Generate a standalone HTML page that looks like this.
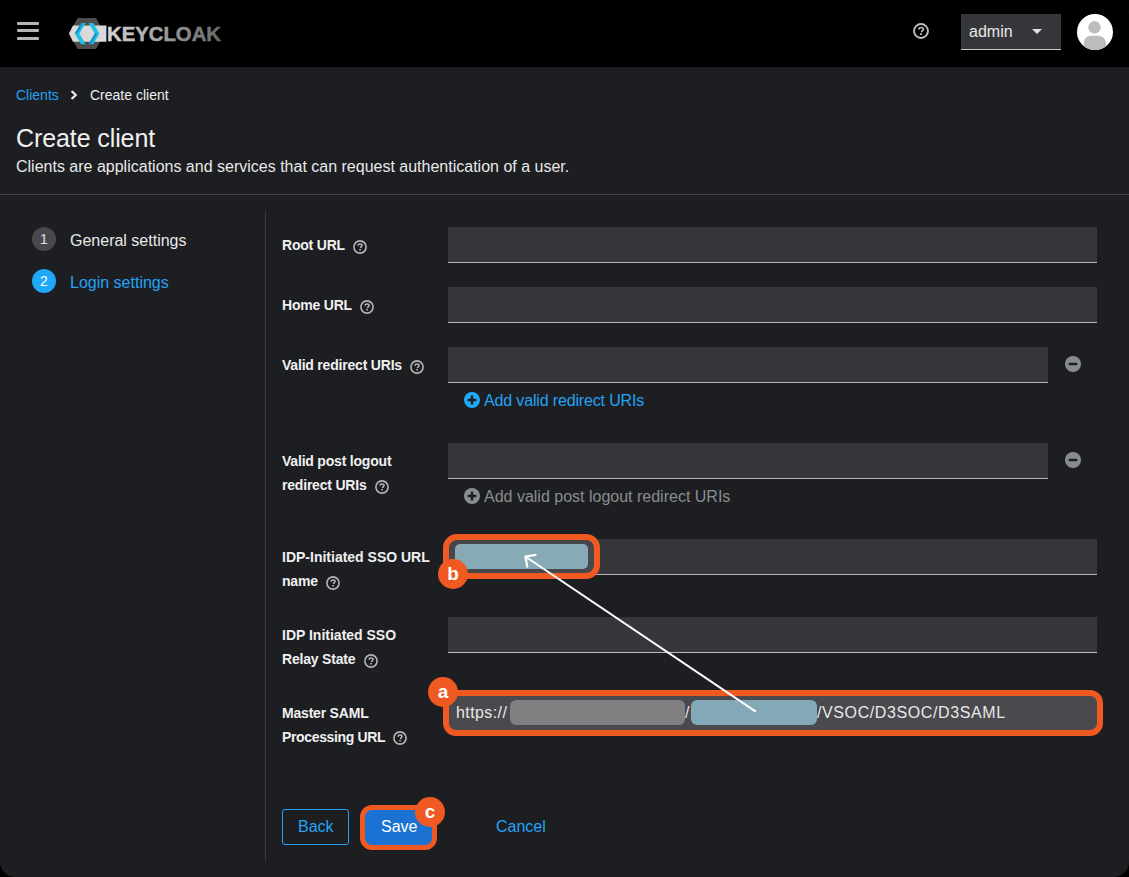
<!DOCTYPE html>
<html><head><meta charset="utf-8">
<style>
*{box-sizing:border-box;margin:0;padding:0}
html,body{width:1129px;height:877px;overflow:hidden;background:#000}
body{font-family:"Liberation Sans",sans-serif;position:relative}
#frame{position:absolute;left:0;top:0;width:1129px;height:877px;background:#1d1e22;border-radius:15px;overflow:hidden}
#mast{position:absolute;left:0;top:0;width:1129px;height:67px;background:#000}
.a{position:absolute;white-space:nowrap}
.t16{font-size:16px;line-height:24px}
.lbl{font-size:14px;font-weight:bold;color:#f0f0f0;line-height:24px;letter-spacing:-0.2px}
.inp{position:absolute;background:#36373b;border-bottom:1px solid #b8bbbe}
.help{position:absolute;width:14px;height:14px}
.link{color:#22a3f5}
.badge{width:30px;height:30px;border-radius:50%;background:#f05a22;color:#fff;font-weight:bold;font-size:19px;line-height:29px;text-align:center}
</style></head><body>
<svg width="0" height="0" style="position:absolute">
  <defs>
    <g id="hq">
      <circle cx="7" cy="7" r="6.1" fill="none" stroke="#b5b5b5" stroke-width="1.6"/>
      <path d="M5.1 5.7 C5.1 4.5 6 3.9 7.05 3.9 C8.2 3.9 9.05 4.5 9.05 5.5 C9.05 6.6 7.5 6.7 7.5 8.1" fill="none" stroke="#b5b5b5" stroke-width="1.5"/>
      <rect x="6.25" y="8.9" width="1.6" height="1.6" fill="#b5b5b5"/>
    </g>
    <g id="minus">
      <circle cx="8" cy="8" r="8" fill="#8a8d90"/>
      <rect x="3.6" y="6.8" width="8.8" height="2.4" rx="0.6" fill="#1d1e22"/>
    </g>
    <g id="plus">
      <circle cx="8" cy="8" r="8"/>
      <rect x="3.6" y="6.8" width="8.8" height="2.4" rx="0.6" fill="#1d1e22"/>
      <rect x="6.8" y="3.6" width="2.4" height="8.8" rx="0.6" fill="#1d1e22"/>
    </g>
  </defs>
</svg>

<div id="frame">
  <div id="mast">
    <!-- hamburger -->
    <div class="a" style="left:17px;top:22px;width:22px;height:3px;background:#b5b5b5;border-radius:1px"></div>
    <div class="a" style="left:17px;top:29px;width:22px;height:3px;background:#b5b5b5;border-radius:1px"></div>
    <div class="a" style="left:17px;top:37px;width:22px;height:3px;background:#b5b5b5;border-radius:1px"></div>
    <!-- logo -->
    <svg class="a" style="left:60px;top:10px" width="170" height="45" viewBox="60 10 170 45">
      <defs>
        <linearGradient id="kg" x1="0" x2="1" y1="0" y2="0">
          <stop offset="0" stop-color="#d6d6d6"/><stop offset="1" stop-color="#666666"/>
        </linearGradient>
      </defs>
      <polygon points="77.7,18 96,18 104.5,33.6 96,49 77.7,49 69,33.6" fill="#4d4d4d"/>
      <polygon points="73,25.6 106.4,25.6 106.4,41.8 73,41.8 69,33.6" fill="#d9d9d9"/>
      <polygon points="81,23 85.6,23 79.4,33.6 85.6,44.2 81,44.2 74.8,33.6" fill="#22bde8"/>
      <polygon points="81,23 83.2,23 77,33.6 74.8,33.6" fill="#0f8fbd"/>
      <polygon points="88.6,23 93.2,23 99.4,33.6 93.2,44.2 88.6,44.2 94.8,33.6" fill="#22bde8"/>
      <polygon points="94.8,33.6 97,33.6 90.8,44.2 88.6,44.2" fill="#0f8fbd"/>
      <text x="107" y="41.3" font-family="Liberation Sans" font-weight="bold" font-size="20.6" fill="url(#kg)" stroke="url(#kg)" stroke-width="0.5" textLength="114" lengthAdjust="spacingAndGlyphs">KEYCLOAK</text>
    </svg>
    <!-- help icon -->
    <svg class="a" style="left:913px;top:23px" width="16" height="16" viewBox="0 0 16 16">
      <circle cx="8" cy="8" r="7" fill="none" stroke="#bdbdbd" stroke-width="1.9"/>
      <path d="M5.9 6.5 C5.9 5.1 6.9 4.5 8.1 4.5 C9.4 4.5 10.4 5.2 10.4 6.3 C10.4 7.6 8.6 7.7 8.6 9.3" fill="none" stroke="#bdbdbd" stroke-width="1.7"/>
      <rect x="7.1" y="10.2" width="1.8" height="1.8" fill="#bdbdbd"/>
    </svg>
    <!-- admin dropdown -->
    <div class="a" style="left:961px;top:14px;width:100px;height:36px;background:#36373b;border-bottom:1px solid #c8c8c8"></div>
    <div class="a t16" style="left:969px;top:20px;color:#e8e8e8">admin</div>
    <svg class="a" style="left:1031px;top:28px" width="12" height="7" viewBox="0 0 12 7"><polygon points="1,1 11,1 6,6" fill="#e0e0e0"/></svg>
    <!-- avatar -->
    <svg class="a" style="left:1077px;top:14px" width="36" height="36" viewBox="0 0 36 36">
      <defs><clipPath id="ac"><circle cx="18" cy="18" r="18"/></clipPath></defs>
      <circle cx="18" cy="18" r="18" fill="#fff"/>
      <g clip-path="url(#ac)">
        <circle cx="17.5" cy="13.3" r="6.2" fill="#bcbcbc"/>
        <path d="M6.8 36 L6.8 30 C6.8 24.5 10 21.7 14 21.7 L21 21.7 C25 21.7 29 24.5 29 30 L29 36 Z" fill="#bcbcbc"/>
      </g>
    </svg>
  </div>

  <!-- breadcrumb -->
  <div class="a link" style="left:16px;top:86px;font-size:14px;line-height:18px">Clients</div>
  <svg class="a" style="left:70px;top:90px" width="9" height="10" viewBox="0 0 9 10"><polyline points="2.2,1.7 5.9,5 2.2,8.3" fill="none" stroke="#e8e8e8" stroke-width="2.3" stroke-linecap="round" stroke-linejoin="round"/></svg>
  <div class="a" style="left:90px;top:86px;font-size:14px;line-height:18px;color:#f0f0f0">Create client</div>

  <div class="a" style="left:16px;top:124px;font-size:25px;line-height:28px;color:#f0f0f0;letter-spacing:-0.1px">Create client</div>
  <div class="a t16" style="left:16px;top:154.5px;color:#e8e8e8">Clients are applications and services that can request authentication of a user.</div>
  <div class="a" style="left:0;top:194px;width:1129px;height:1px;background:#44464a"></div>

  <!-- steps -->
  <div class="a" style="left:32px;top:227px;width:24px;height:24px;border-radius:50%;background:#49494d;color:#e0e0e0;font-size:14px;line-height:24px;text-align:center">1</div>
  <div class="a t16" style="left:70px;top:229px;color:#e8e8e8">General settings</div>
  <div class="a" style="left:32px;top:269px;width:24px;height:24px;border-radius:50%;background:#1fa7f8;color:#fff;font-size:14px;line-height:24px;text-align:center">2</div>
  <div class="a t16 link" style="left:70px;top:271px">Login settings</div>

  <div class="a" style="left:265px;top:211px;width:1px;height:650px;background:#3c3f42"></div>

  <!-- form -->
  
  <!-- Root URL -->
  <div class="a lbl" style="left:282px;top:233px">Root URL</div>
  <svg class="help" style="left:353px;top:240px" viewBox="0 0 14 14"><use href="#hq"/></svg>
  <div class="inp" style="left:448px;top:227px;width:649px;height:36px"></div>

  <!-- Home URL -->
  <div class="a lbl" style="left:282px;top:293px">Home URL</div>
  <svg class="help" style="left:360px;top:300px" viewBox="0 0 14 14"><use href="#hq"/></svg>
  <div class="inp" style="left:448px;top:287px;width:649px;height:36px"></div>

  <!-- Valid redirect URIs -->
  <div class="a lbl" style="left:282px;top:353px">Valid redirect URIs</div>
  <svg class="help" style="left:410px;top:360px" viewBox="0 0 14 14"><use href="#hq"/></svg>
  <div class="inp" style="left:448px;top:347px;width:600px;height:36px"></div>
  <svg class="a" style="left:1065px;top:356px" width="16" height="16" viewBox="0 0 16 16"><use href="#minus"/></svg>
  <svg class="a" style="left:464px;top:392px" width="16" height="16" viewBox="0 0 16 16"><use href="#plus" fill="#22a8f5"/></svg>
  <div class="a t16 link" style="left:484px;top:389px;letter-spacing:-0.15px">Add valid redirect URIs</div>

  <!-- Valid post logout redirect URIs -->
  <div class="a lbl" style="left:282px;top:449px">Valid post logout</div>
  <div class="a lbl" style="left:282px;top:473px">redirect URIs</div>
  <svg class="help" style="left:375px;top:480px" viewBox="0 0 14 14"><use href="#hq"/></svg>
  <div class="inp" style="left:448px;top:443px;width:600px;height:36px"></div>
  <svg class="a" style="left:1065px;top:452px" width="16" height="16" viewBox="0 0 16 16"><use href="#minus"/></svg>
  <svg class="a" style="left:464px;top:488px" width="16" height="16" viewBox="0 0 16 16"><use href="#plus" fill="#8a8d90"/></svg>
  <div class="a t16" style="left:484px;top:484.5px;color:#8a8d90">Add valid post logout redirect URIs</div>

  <!-- IDP-Initiated SSO URL name -->
  <div class="a lbl" style="left:282px;top:545px;letter-spacing:0px">IDP-Initiated SSO URL</div>
  <div class="a lbl" style="left:282px;top:569px">name</div>
  <svg class="help" style="left:326px;top:576px" viewBox="0 0 14 14"><use href="#hq"/></svg>
  <div class="inp" style="left:448px;top:539px;width:649px;height:36px"></div>

  <!-- IDP Initiated SSO Relay State -->
  <div class="a lbl" style="left:282px;top:623px;letter-spacing:0px">IDP Initiated SSO</div>
  <div class="a lbl" style="left:282px;top:647px">Relay State</div>
  <svg class="help" style="left:364px;top:654px" viewBox="0 0 14 14"><use href="#hq"/></svg>
  <div class="inp" style="left:448px;top:617px;width:649px;height:36px"></div>

  <!-- Master SAML Processing URL -->
  <div class="a lbl" style="left:282px;top:701px">Master SAML</div>
  <div class="a lbl" style="left:282px;top:725px;letter-spacing:-0.35px">Processing URL</div>
  <svg class="help" style="left:393px;top:731px" viewBox="0 0 14 14"><use href="#hq"/></svg>

  <!-- annotation a -->
  <div class="a" style="left:443px;top:690px;width:659.5px;height:45.5px;border:6px solid #f05a22;border-radius:13px;background:#4a494d"></div>
  <div class="a t16" style="left:456px;top:701px;color:#e8e8e8;letter-spacing:0.4px">https://</div>
  <div class="a" style="left:510px;top:700px;width:175px;height:25px;border-radius:6px;background:#808082"></div>
  <div class="a t16" style="left:685px;top:701px;color:#e8e8e8">/</div>
  <div class="a" style="left:691px;top:700px;width:126px;height:25px;border-radius:6px;background:#83a9b9"></div>
  <div class="a t16" style="left:817px;top:701px;color:#e8e8e8;letter-spacing:0.6px">/VSOC/D3SOC/D3SAML</div>

  <!-- annotation b -->
  <div class="a" style="left:443px;top:533.5px;width:157px;height:45.5px;border:6px solid #f05a22;border-radius:14px;background:#47464a"></div>
  <div class="a" style="left:455px;top:544px;width:133px;height:25px;border-radius:5px;background:#87aab6"></div>

  <!-- buttons -->
  <div class="a" style="left:282px;top:809px;width:67px;height:36px;border:1px solid #22a3f5;border-radius:3px"></div>
  <div class="a t16 link" style="left:298px;top:814.5px">Back</div>
  <div class="a" style="left:360px;top:804.5px;width:77px;height:45.5px;border:5.5px solid #f05a22;border-radius:12px;background:#1c72d3"></div>
  <div class="a t16" style="left:381px;top:815px;color:#fff">Save</div>
  <div class="a t16 link" style="left:496px;top:814.5px">Cancel</div>

  <!-- arrow -->
  <svg class="a" style="left:0;top:0" width="1129" height="877" viewBox="0 0 1129 877">
    <line x1="755.8" y1="711.7" x2="526" y2="557" stroke="#fff" stroke-width="2"/>
    <polyline points="535.5,554.9 525.4,556.7 527.3,566.6" fill="none" stroke="#fff" stroke-width="2.2" stroke-linecap="round" stroke-linejoin="round"/>
  </svg>

  <!-- badges -->
  <div class="a badge" style="left:428px;top:677px">a</div>
  <div class="a badge" style="left:438px;top:559px">b</div>
  <div class="a badge" style="left:415px;top:797px">c</div>

</div>
</body></html>
